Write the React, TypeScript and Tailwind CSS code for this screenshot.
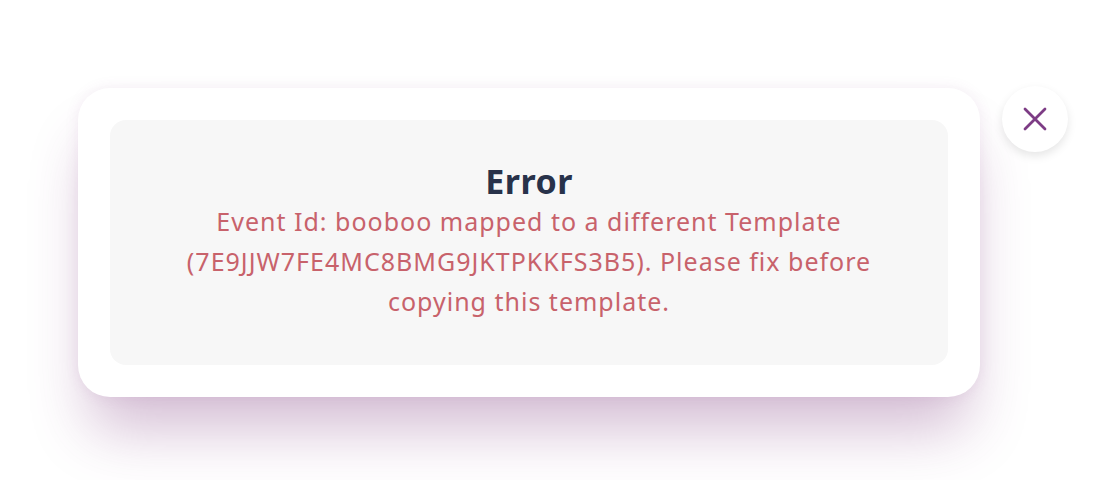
import React from "react";

const App = () => {
    return (
        <div className="w-[1120px] h-[480px] bg-white overflow-hidden" style={{fontFamily: '"Noto Sans", "Open Sans", sans-serif'}}>
            <div className="flex items-start pt-[88px] pl-[78px]">
                <div className="w-[902px] h-[309px] bg-white rounded-[32px] p-8 shadow-[0_44px_60px_-12px_rgba(120,50,120,0.32),0_0_14px_rgba(150,80,150,0.10)]">
                    <div className="h-full bg-[#f7f7f7] rounded-[16px] flex flex-col items-center justify-center text-center pb-1">
                        <h2 className="text-[34px] leading-[40px] font-bold tracking-[0.5px] text-[#28324a]">Error</h2>
                        <p className="text-[25px] leading-[40px] tracking-[1px] text-[#c8626b] max-w-[790px]">
                            Event Id: booboo mapped to a different Template (7E9JJW7FE4MC8BMG9JKTPKKFS3B5). Please fix before copying this template.
                        </p>
                    </div>
                </div>
                <button className="ml-[22px] mt-[-2px] w-[66px] h-[66px] rounded-full bg-white shadow-[0_4px_10px_rgba(0,0,0,0.10)] flex items-center justify-center">
                    <svg width="30" height="30" viewBox="0 0 24 24" fill="none" stroke="#7d3c85" strokeWidth="2.2" strokeLinecap="round">
                        <path d="M4 4l16 16M20 4L4 20" />
                    </svg>
                </button>
            </div>
        </div>
    );
};

export default App;
